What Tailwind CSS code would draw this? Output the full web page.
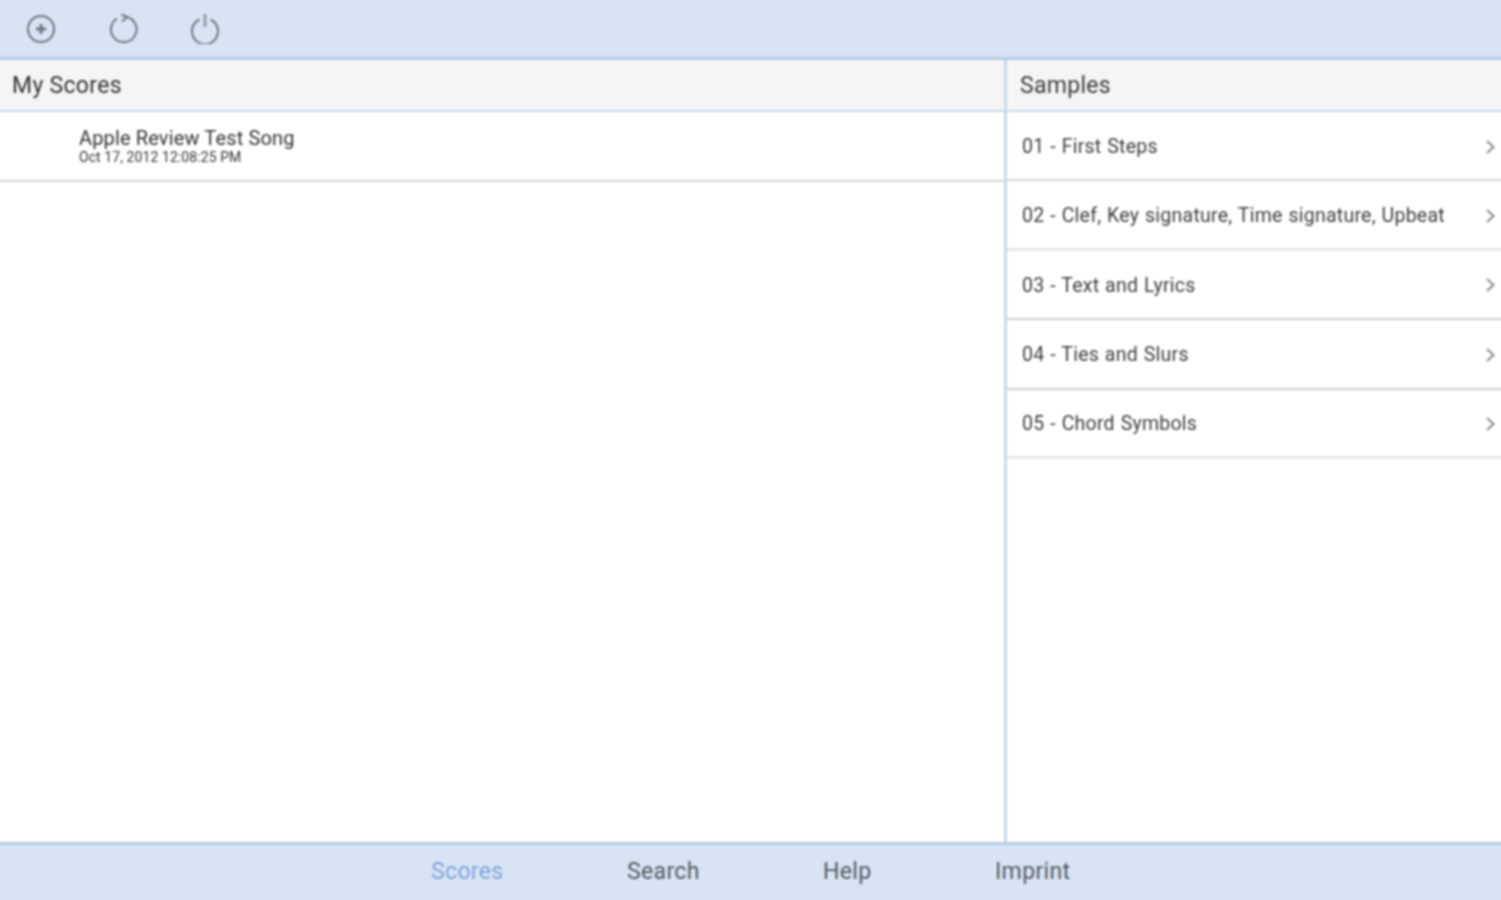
<!DOCTYPE html>
<html lang="en">
<head>
  <meta charset="UTF-8" />
  <title>Scores</title>
  <script src="https://cdn.jsdelivr.net/npm/@tailwindcss/browser@4"></script>
</head>
<body class="bg-white font-['Roboto','Liberation_Sans',sans-serif] text-[#3a3a3a] overflow-hidden">
  <!-- 4px bleed on every side so the blur does not fade at the window edge -->
  <div class="flex flex-col h-[908px] w-[1509px] -ml-1 -mt-1 blur-[0.8px]">

    <!-- toolbar -->
    <header class="h-[64px] shrink-0 bg-[#d8e4f4] border-b-[3px] border-[#b4cbe8] flex items-center gap-[52px] pt-1 pl-[30px]">
      <svg class="w-[30px] h-[30px]" viewBox="0 0 30 30" fill="none" stroke="#6f7781" stroke-width="2">
        <circle cx="15" cy="15" r="13" />
        <path d="M15 10v10M10 15h10" stroke-width="2.8" />
      </svg>
      <svg class="w-[30px] h-[30px]" viewBox="0 0 30 30" fill="none" stroke="#6f7781" stroke-width="2">
        <path d="M19 3A12.8 12.8 0 1 1 9 4.5" />
        <path d="M13 0l6 3-5 4.500" stroke-width="2" />
      </svg>
      <svg class="w-[30px] h-[30px]" viewBox="0 0 30 30" fill="none" stroke="#6f7781" stroke-width="2">
        <path d="M9.500 5.500a13 13 0 1 0 11 0" />
        <path d="M15 -1v14" stroke="#8d949d" stroke-width="2.600" />
      </svg>
    </header>

    <main class="flex flex-1 min-h-0">
      <!-- my scores -->
      <section class="w-[1008px] shrink-0">
        <h2 class="h-[52px] bg-[#f5f5f5] border-b-2 border-[#c8d9ee] flex items-center pt-[2px] pl-4 text-[23px] tracking-[0.3px] text-[#333]">My Scores</h2>
        <div class="h-[70px] border-b-2 border-[#d4d4d4] pl-[83px] pt-[14px]">
          <p class="text-[20px] leading-[24px] tracking-[0.14px] text-[#333]">Apple Review Test Song</p>
          <p class="text-[14px] leading-[14px] tracking-[0.08px] text-[#333]">Oct 17, 2012 12:08:25 PM</p>
        </div>
      </section>

      <!-- samples -->
      <section class="flex-1 border-l-[3px] border-[#c8d9ee]">
        <h2 class="h-[52px] bg-[#f5f5f5] border-b-2 border-[#c8d9ee] flex items-center pt-[2px] pl-[13px] text-[23px] tracking-[0.3px] text-[#3a3a3a]">Samples</h2>
        <ul>
          <li class="h-[69.4px] border-b-2 border-[#d4d4d4] flex items-center justify-between pt-[2px] pl-[15px] pr-[9px] text-[19.5px] tracking-[0.25px] [word-spacing:0.7px] text-[#3d3d3d]">
            <span>01 - First Steps</span>
            <svg class="w-[11px] h-[16px]" viewBox="0 0 11 16" fill="none" stroke="#8a8a8a" stroke-width="2"><path d="M2 2l6.500 6L2 14" /></svg>
          </li>
          <li class="h-[69.4px] border-b-[3px] border-[#e6e6e6] flex items-center justify-between pt-[2px] pl-[15px] pr-[9px] text-[19.5px] tracking-[0.25px] [word-spacing:0.7px] text-[#3d3d3d]">
            <span>02 - Clef, Key signature, Time signature, Upbeat</span>
            <svg class="w-[11px] h-[16px]" viewBox="0 0 11 16" fill="none" stroke="#8a8a8a" stroke-width="2"><path d="M2 2l6.500 6L2 14" /></svg>
          </li>
          <li class="h-[69.4px] border-b-2 border-[#cfcfcf] flex items-center justify-between pt-[2px] pl-[15px] pr-[9px] text-[19.5px] tracking-[0.25px] [word-spacing:0.7px] text-[#3d3d3d]">
            <span>03 - Text and Lyrics</span>
            <svg class="w-[11px] h-[16px]" viewBox="0 0 11 16" fill="none" stroke="#8a8a8a" stroke-width="2"><path d="M2 2l6.500 6L2 14" /></svg>
          </li>
          <li class="h-[69.4px] border-b-2 border-[#cfcfcf] flex items-center justify-between pt-[2px] pl-[15px] pr-[9px] text-[19.5px] tracking-[0.25px] [word-spacing:0.7px] text-[#3d3d3d]">
            <span>04 - Ties and Slurs</span>
            <svg class="w-[11px] h-[16px]" viewBox="0 0 11 16" fill="none" stroke="#8a8a8a" stroke-width="2"><path d="M2 2l6.500 6L2 14" /></svg>
          </li>
          <li class="h-[69.4px] border-b-[3px] border-[#e8e8e8] flex items-center justify-between pt-[2px] pl-[15px] pr-[9px] text-[19.5px] tracking-[0.25px] [word-spacing:0.7px] text-[#3d3d3d]">
            <span>05 - Chord Symbols</span>
            <svg class="w-[11px] h-[16px]" viewBox="0 0 11 16" fill="none" stroke="#8a8a8a" stroke-width="2"><path d="M2 2l6.500 6L2 14" /></svg>
          </li>
        </ul>
      </section>
    </main>

    <!-- tab bar -->
    <nav class="h-[62px] shrink-0 bg-[#d8e4f4] border-t-[3px] border-[#b4cbe8] flex items-center pb-1 pl-[435px] text-[23px] tracking-[0.35px] text-[#555b63]">
      <a class="w-[196px] text-[#7fa6dc]">Scores</a>
      <a class="w-[196px]">Search</a>
      <a class="w-[172px]">Help</a>
      <a>Imprint</a>
    </nav>
  </div>
</body>
</html>
